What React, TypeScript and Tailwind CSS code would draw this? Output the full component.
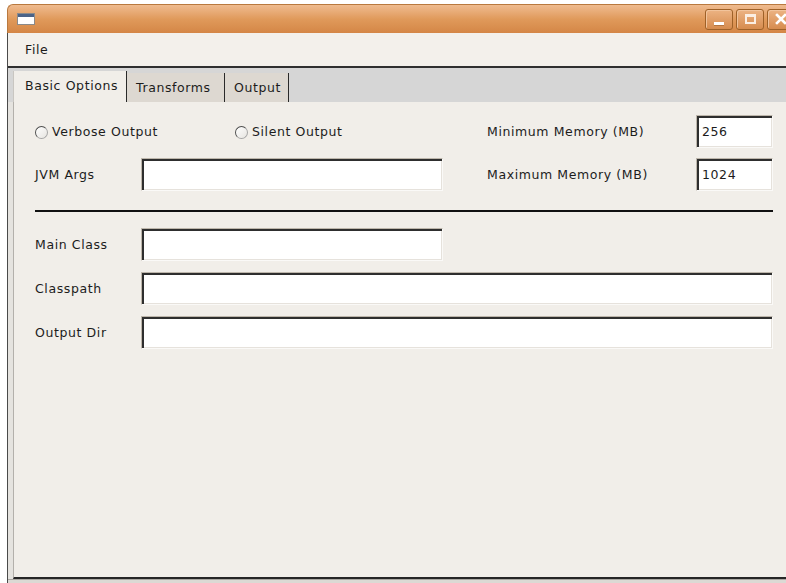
import React from "react";

// sunken text field, GTK look
function Field({ className = "", value = "" }: { className?: string; value?: string }) {
  return (
    <div
      className={`h-[33px] bg-white border border-t-[#bdb6ab] border-l-[#bdb6ab] border-r-[#faf9f7] border-b-[#faf9f7] shadow-[inset_2px_2px_0_#2e2e2e,inset_-1px_-1px_0_#e6e2dc] flex items-center pl-[5px] pt-[1px] ${className}`}
    >
      {value}
    </div>
  );
}

function Radio({ label }: { label: string }) {
  return (
    <div className="flex items-center gap-[4px] pt-[2px]">
      <span className="w-[13px] h-[13px] rounded-full border border-[#4e4e4e] border-r-[#a5a5a5] border-b-[#a5a5a5] bg-linear-to-br from-[#ffffff] to-[#e6e4e0]" />
      <span>{label}</span>
    </div>
  );
}

function TitleButton({ children }: { children: React.ReactNode }) {
  return (
    <div className="w-[28px] h-[21px] rounded-[3px] border border-[#9e6128] bg-linear-to-b from-[#ecb383] to-[#d68c4e] shadow-[inset_1px_1px_0_#f2c49c] flex items-center justify-center">
      {children}
    </div>
  );
}

export default function App() {
  return (
    <div className="w-[786px] h-[583px] overflow-hidden bg-white pl-[7px] pt-[4px] font-['DejaVu_Sans',sans-serif] text-[12.5px] tracking-[0.6px] text-[#1c1c1c]">
      <div className="w-[790px] h-[579px] flex flex-col">
        {/* title bar */}
        <div className="h-[29px] rounded-tl-[6px] border-l border-t border-[#b9793f] bg-linear-to-b from-[#efbb8f] via-[#e09a5b] to-[#d48646] flex items-center pl-[9px] pr-[2px]">
          <div className="w-[18px] h-[12px] border border-[#8a8a8a] bg-white flex flex-col">
            <div className="h-[3px] bg-[#4b6388]" />
          </div>
          <div className="ml-auto flex gap-[3px]">
            <TitleButton>
              <div className="w-[10px] h-[3px] bg-white mt-[9px] shadow-[0_1px_0_#b57640]" />
            </TitleButton>
            <TitleButton>
              <div className="w-[11px] h-[10px] border-2 border-t-[3px] border-[#fbeee2]" />
            </TitleButton>
            <TitleButton>
              <svg width="12" height="12" viewBox="0 0 12 12">
                <path d="M2 2 L10 10 M10 2 L2 10" stroke="#ffffff" strokeWidth="2.6" strokeLinecap="square" />
              </svg>
            </TitleButton>
          </div>
        </div>

        <div className="flex-1 flex flex-col border-l border-[#4a4a4a]">
          {/* menu bar */}
          <div className="h-[33px] bg-[#f3f0eb] flex items-center pl-[17px] pt-[1px]">File</div>

          {/* tab strip */}
          <div className="h-[36px] border-t-2 border-[#2f2f2f] bg-[#d6d6d6] flex items-end pl-[5px]">
            <div className="w-[114px] h-[31px] bg-[#f1eee9] border-l border-[#c9c6c1] border-r border-r-[#2a2a2a] flex items-center pl-[11px] pb-[1px]">
              Basic Options
            </div>
            <div className="w-[98px] h-[29px] bg-[#ddd8d1] border-r border-[#2a2a2a] flex items-center pl-[9px] pt-[1px]">
              Transforms
            </div>
            <div className="w-[64px] h-[29px] bg-[#ddd8d1] border-r border-[#2a2a2a] flex items-center pl-[9px] pt-[1px]">
              Output
            </div>
          </div>

          {/* tab content */}
          <div className="flex-1 flex bg-[#e5e3df] pl-[5px]">
            <div className="flex-1 flex flex-col bg-[#f1eee9] border-l border-[#b3b0ab] border-b-2 border-b-[#262626] pl-[21px] pt-[13px]">
              <div className="w-[738px] flex flex-col">
                <div className="flex items-center h-[33px]">
                  <div className="w-[200px]">
                    <Radio label="Verbose Output" />
                  </div>
                  <div className="w-[252px]">
                    <Radio label="Silent Output" />
                  </div>
                  <div className="w-[209px] pt-[1px]">Minimum Memory (MB)</div>
                  <Field className="w-[77px]" value="256" />
                </div>

                <div className="flex items-center h-[33px] mt-[10px]">
                  <div className="w-[106px] pt-[2px]">JVM Args</div>
                  <Field className="w-[302px]" />
                  <div className="w-[44px]" />
                  <div className="w-[209px] pt-[2px]">Maximum Memory (MB)</div>
                  <Field className="w-[77px]" value="1024" />
                </div>

                <div className="h-[2px] bg-[#111] mt-[19px]" />

                <div className="flex items-center h-[33px] mt-[16px]">
                  <div className="w-[106px] pt-[1px]">Main Class</div>
                  <Field className="w-[302px]" />
                </div>
                <div className="flex items-center h-[33px] mt-[11px]">
                  <div className="w-[106px] pt-[1px]">Classpath</div>
                  <Field className="flex-1" />
                </div>
                <div className="flex items-center h-[33px] mt-[11px]">
                  <div className="w-[106px] pt-[1px]">Output Dir</div>
                  <Field className="flex-1" />
                </div>
              </div>
            </div>
          </div>
          <div className="h-[4px] bg-[#dcd9d4] border-t border-[#a9a6a1]" />
        </div>
      </div>
    </div>
  );
}
